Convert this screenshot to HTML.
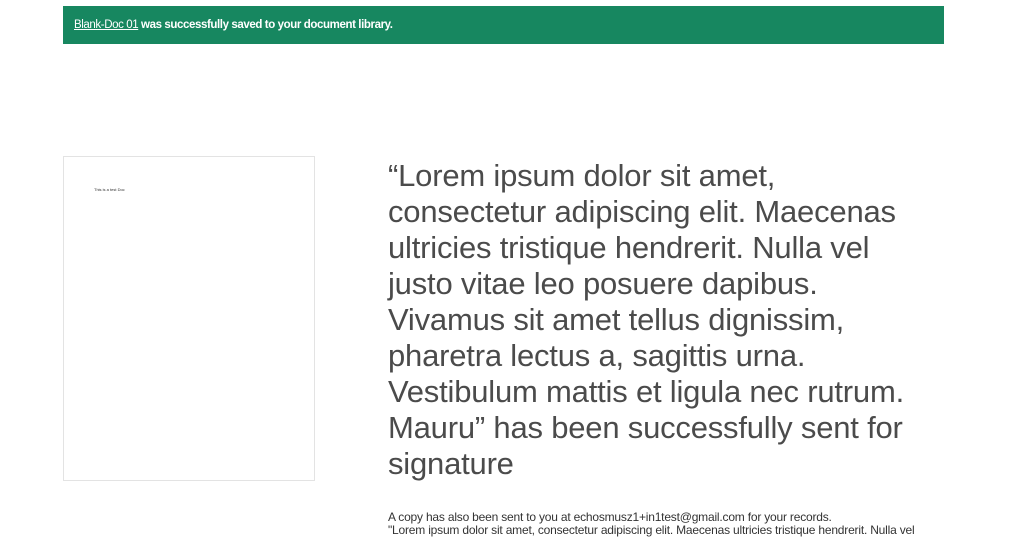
<html><head><style>
body{margin:0;width:1012px;height:532px;overflow:hidden;background:#fff;font-family:"Liberation Sans",sans-serif;position:relative}
.bar{position:absolute;left:63px;top:6px;width:881px;height:38px;background:#178760;color:#fff;font-size:11.5px;line-height:38px;font-weight:bold;letter-spacing:-0.4px}
.bar span{padding-left:11px}
.bar u{font-weight:normal}
.doc{position:absolute;left:63px;top:156px;width:250px;height:323px;border:1px solid #e3e3e3}
.doc div{position:absolute;left:30px;top:30px;font-size:4px;color:#333}
.h{position:absolute;left:388px;top:158px;font-size:31px;line-height:36px;color:#4b4b4b;white-space:nowrap;letter-spacing:-0.2px}
.s{position:absolute;left:388px;top:511px;font-size:12px;line-height:13px;color:#333;white-space:nowrap;letter-spacing:-0.2px}
</style></head><body>
<div class="bar"><span><u>Blank-Doc 01</u> was successfully saved to your document library.</span></div>
<div class="doc"><div>This is a test Doc</div></div>
<div class="h">“Lorem ipsum dolor sit amet,<br>consectetur adipiscing elit. Maecenas<br>ultricies tristique hendrerit. Nulla vel<br>justo vitae leo posuere dapibus.<br>Vivamus sit amet tellus dignissim,<br>pharetra lectus a, sagittis urna.<br>Vestibulum mattis et ligula nec rutrum.<br>Mauru” has been successfully sent for<br>signature</div>
<div class="s">A copy has also been sent to you at echosmusz1+in1test@gmail.com for your records.<br>"Lorem ipsum dolor sit amet, consectetur adipiscing elit. Maecenas ultricies tristique hendrerit. Nulla vel</div>
</body></html>
